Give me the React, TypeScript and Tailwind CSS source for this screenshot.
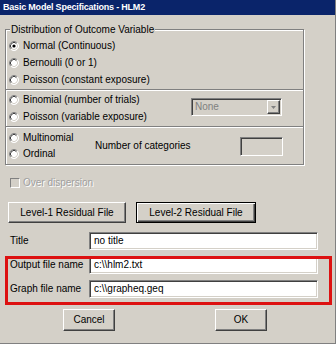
import React from 'react';

const sunken =
    'border border-t-[#808080] border-l-[#808080] border-r-white border-b-white shadow-[inset_1px_1px_0_#404040,inset_-1px_-1px_0_#d4d0c8]';
const raised =
    'border border-t-white border-l-white border-r-[#404040] border-b-[#404040] shadow-[inset_-1px_-1px_0_#808080]';

function Radio({ checked = false }: { checked?: boolean }) {
    return (
        <svg width="10" height="10" viewBox="0 0 10 10" className="shrink-0">
            <circle cx="5" cy="5" r="4.5" fill="#fff" />
            <path d="M1.8 8.2 A4.5 4.5 0 0 1 8.2 1.8" fill="none" stroke="#808080" strokeWidth="1" />
            <path d="M8.2 1.8 A4.5 4.5 0 0 1 1.8 8.2" fill="none" stroke="#fff" strokeWidth="1" />
            <path d="M2.5 7.5 A3.5 3.5 0 0 1 7.5 2.5" fill="none" stroke="#404040" strokeWidth="1" />
            <path d="M7.5 2.5 A3.5 3.5 0 0 1 2.5 7.5" fill="none" stroke="#d4d0c8" strokeWidth="1" />
            {checked && <circle cx="5" cy="5" r="1.6" fill="#000" />}
        </svg>
    );
}

function RadioRow({ label, checked, h = 'h-[17px]' }: { label: string; checked?: boolean; h?: string }) {
    return (
        <div className={`flex items-center gap-[4px] pl-[3px] ${h}`}>
            <Radio checked={checked} />
            <span>{label}</span>
        </div>
    );
}

function Separator() {
    return <div className="border-t border-t-[#808080] border-b border-b-white" />;
}

function Field({ label, value }: { label: string; value: string }) {
    return (
        <div className="flex items-center h-[18px]">
            <span className="w-[84px] pl-[5px]">{label}</span>
            <div className={`w-[229px] h-[18px] bg-white flex items-center pl-[4px] ${sunken}`}>{value}</div>
        </div>
    );
}

export default function App() {
    return (
        <div className="relative w-[336px] h-[344px] bg-[#d4d0c8] flex flex-col font-['Liberation_Sans',Arial,sans-serif] text-[10px] text-black leading-none border-r border-b border-r-[#808080] border-b-[#808080]">
            <div className="h-[15px] shrink-0 bg-[#0a246a] text-white font-bold text-[9px] tracking-[-0.2px] flex items-center pl-[3px]">
                Basic Model Specifications - HLM2
            </div>

            <div className="pl-[5px] pt-[14px] flex flex-col">
                {/* outcome distribution group */}
                <div className="relative w-[299px] border border-[#808080] shadow-[inset_1px_1px_0_#fff,1px_1px_0_#fff]">
                    <span className="absolute -top-[6px] left-[4px] px-[1px] bg-[#d4d0c8] leading-[11px]">
                        Distribution of Outcome Variable
                    </span>

                    <div className="pt-[7px] pb-[1px]">
                        <RadioRow label="Normal (Continuous)" checked />
                        <RadioRow label="Bernoulli  (0 or 1)" />
                        <RadioRow label="Poisson (constant exposure)" />
                    </div>
                    <Separator />

                    <div className="flex pb-[1px]">
                        <div className="flex-1">
                            <RadioRow label="Binomial (number of trials)" />
                            <RadioRow label="Poisson (variable exposure)" />
                        </div>
                        <div className={`mt-[7px] mr-[21px] w-[91px] h-[18px] flex items-center bg-[#d4d0c8] ${sunken}`}>
                            <span className="flex-1 pl-[3px] text-[#808080]">None</span>
                            <div className={`w-[13px] h-[14px] mr-[1px] flex items-center justify-center bg-[#d4d0c8] ${raised}`}>
                                <svg width="5" height="3" viewBox="0 0 5 3">
                                    <path d="M0 0 H5 L2.5 3 Z" fill="#808080" />
                                </svg>
                            </div>
                        </div>
                    </div>
                    <Separator />

                    <div className="flex items-center pt-[2px] pb-[2px]">
                        <div className="w-[89px]">
                            <RadioRow label="Multinomial" h="h-[16px]" />
                            <RadioRow label="Ordinal" h="h-[16px]" />
                        </div>
                        <span className="flex-1">Number of categories</span>
                        <div className={`w-[43px] h-[19px] mr-[20px] bg-[#d4d0c8] ${sunken}`} />
                    </div>
                </div>

                <div className="mt-[10px] h-[16px] pl-[5px] flex items-center gap-[3px]">
                    <div className="w-[10px] h-[10px] border border-t-[#808080] border-l-[#808080] border-r-white border-b-white bg-[#d4d0c8]" />
                    <span className="text-[#a0a0a0] [text-shadow:1px_1px_0_#fff]">Over dispersion</span>
                </div>

                <div className="mt-[11px] pl-[3px] flex gap-[10px]">
                    <button className={`w-[118px] h-[21px] bg-[#d4d0c8] ${raised}`}>Level-1 Residual File</button>
                    <button className="w-[120px] h-[21px] bg-[#d4d0c8] border border-black shadow-[inset_1px_1px_0_#fff,inset_-1px_-1px_0_#404040,inset_-2px_-2px_0_#808080]">
                        Level-2 Residual File
                    </button>
                </div>

                <div className="mt-[9px] flex flex-col gap-[6px]">
                    <Field label="Title" value="no title" />
                    <Field label="Output file name" value={'c:\\\\hlm2.txt'} />
                    <Field label="Graph file name" value={'c:\\\\grapheq.geq'} />
                </div>

                <div className="mt-[11px] flex">
                    <button className={`ml-[58px] w-[52px] h-[22px] bg-[#d4d0c8] ${raised}`}>Cancel</button>
                    <button className={`ml-[100px] w-[52px] h-[22px] bg-[#d4d0c8] ${raised}`}>OK</button>
                </div>
            </div>

            {/* red highlight annotation */}
            <div className="absolute left-[5px] top-[256px] w-[327px] h-[49px] border-[3px] border-[#dd1111]" />
        </div>
    );
}
